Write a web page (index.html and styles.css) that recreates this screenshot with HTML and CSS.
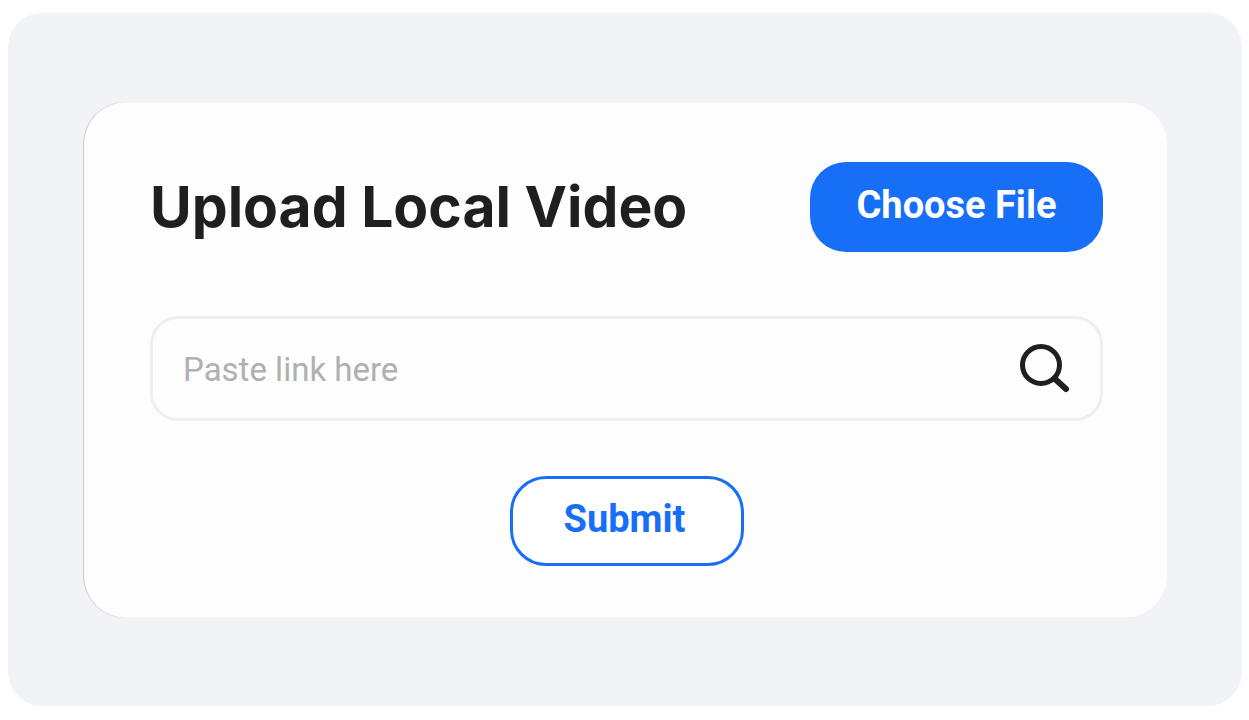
FILE: index.html
```html
<!DOCTYPE html>
<html lang="en">
<head>
  <meta charset="utf-8">
  <meta name="viewport" content="width=device-width, initial-scale=1">
  <title>Upload Local Video</title>
  <link rel="stylesheet" href="styles.css">
</head>
<body>
  <main class="panel">
    <form class="card">
      <div class="card-header">
        <h1>Upload Local Video</h1>
        <button type="button" class="btn btn-primary">Choose File</button>
      </div>
      <div class="link-field">
        <input type="text" placeholder="Paste link here" aria-label="Video link">
        <button type="button" class="search-button" aria-label="Search">
          <svg width="52" height="52" viewBox="0 0 52 52" fill="none" stroke="#1f1f1f" stroke-linecap="round">
            <circle cx="23" cy="22" r="18.5" stroke-width="5"/>
            <path d="M36.5 35.5L48 46" stroke-width="6"/>
          </svg>
        </button>
      </div>
      <button type="submit" class="btn btn-outline">Submit</button>
    </form>
  </main>
</body>
</html>
```

FILE: styles.css
```css
* {
  box-sizing: border-box;
}
body {
  margin: 0;
  padding: 13px 7px 13px 8px;
  background-color: #fff;
  font-family: Roboto, "Liberation Sans", sans-serif;
}
.panel {
  padding: 89px 75px 88px;
  background-color: #f1f3f7;
  border-radius: 34px;
}
.card {
  display: flex;
  flex-direction: column;
  padding: 60px 64px 52px 67px;
  background-color: #fdfdfd;
  border-radius: 42px;
  box-shadow: inset 1px 0 1px rgba(0, 0, 0, 0.2);
}
.card-header {
  display: flex;
  flex-wrap: wrap;
  justify-content: space-between;
  align-items: center;
  gap: 20px;
  margin-bottom: 64px;
}
h1 {
  margin: 0;
  font-family: Inter, "Liberation Sans", sans-serif;
  font-size: 57px;
  font-weight: 700;
  line-height: 72px;
  color: #1f1f1f;
}
.btn {
  height: 90px;
  padding: 0 44px 4px;
  border-radius: 36px;
  font-family: inherit;
  font-size: 38px;
  font-weight: 700;
  cursor: pointer;
}
.btn-primary {
  min-width: 293px;
  border: none;
  background-color: #176ff7;
  color: #fff;
}
.btn-outline {
  align-self: center;
  min-width: 234px;
  padding-right: 48px;
  border: 3px solid #176ff7;
  background-color: #fff;
  color: #176ff7;
}
.link-field {
  display: flex;
  align-items: center;
  height: 105px;
  margin-bottom: 55px;
  padding: 0 30px;
  border: 3px solid #efeff0;
  border-radius: 28px;
}
.link-field:focus-within {
  border-color: #176ff7;
}
.link-field input {
  flex: 1;
  min-width: 0;
  height: 66px;
  padding: 2px 0 0;
  border: none;
  outline: none;
  background: none;
  font-family: inherit;
  font-size: 33px;
  color: #1f1f1f;
}
.link-field input::placeholder {
  color: #b0b0b0;
  opacity: 1;
}
.search-button {
  display: flex;
  padding: 0;
  border: none;
  background: none;
  cursor: pointer;
}
```
